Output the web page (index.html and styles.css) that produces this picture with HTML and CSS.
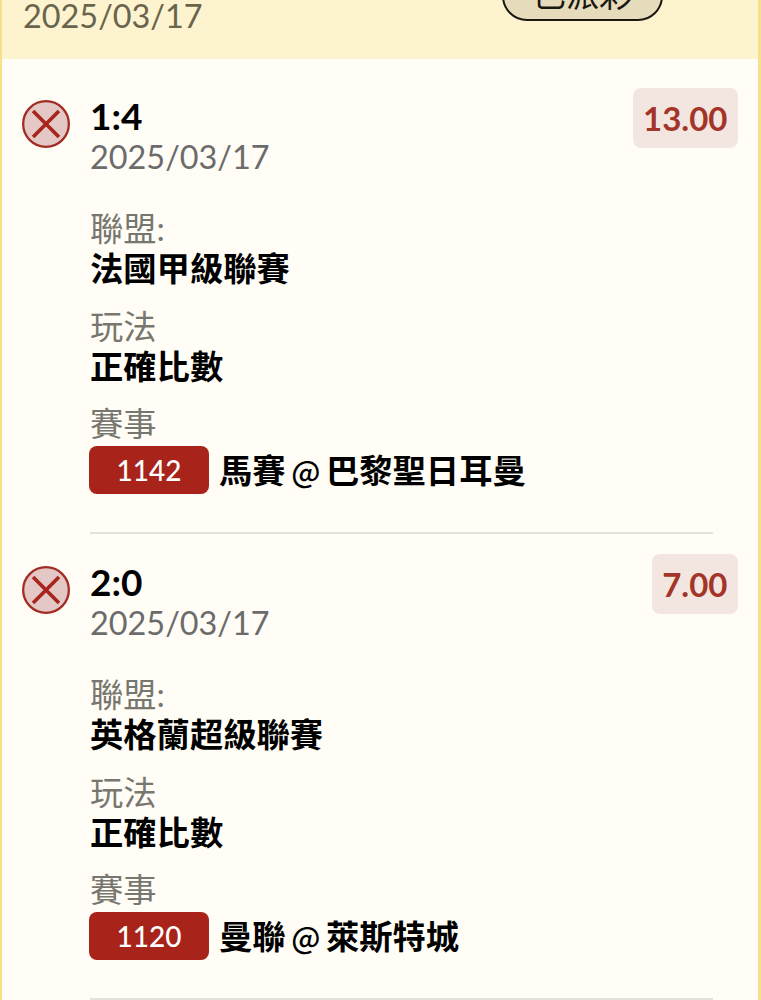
FILE: index.html
```html
<!DOCTYPE html>
<html lang="zh-Hant">
<head>
  <meta charset="UTF-8" />
  <meta name="viewport" content="width=device-width, initial-scale=1" />
  <title>已派彩</title>
  <link rel="stylesheet" href="styles.css">
</head>
<body>
  <div class="slip">
    <!-- Header -->
    <div class="slip-head">
      <div class="head-date">2025/03/17</div>
      <div class="paid-btn">已派彩</div>
    </div>

    <!-- Bet 1 -->
    <div class="bet">
      <svg class="lost-icon" viewBox="0 0 50 50">
        <circle cx="25" cy="25" r="23.8" fill="#e3c8c6" stroke="#a32c24" stroke-width="2.4"/>
        <path d="M11.5 11.5 L38.5 38.5 M38.5 11.5 L11.5 38.5" stroke="#a8241c" stroke-width="3.8"/>
      </svg>
      <div class="bet-body">
        <div class="bet-top">
          <div>
            <div class="score">1:4</div>
            <div class="bet-date">2025/03/17</div>
          </div>
          <div class="odds">13.00</div>
        </div>
        <div class="field first">
          <div class="field-label">聯盟:</div>
          <div class="field-value">法國甲級聯賽</div>
        </div>
        <div class="field">
          <div class="field-label">玩法</div>
          <div class="field-value">正確比數</div>
        </div>
        <div class="field">
          <div class="field-label">賽事</div>
          <div class="match">
            <span class="match-no">1142</span>
            <span class="field-value">馬賽 <span class="at">@</span> 巴黎聖日耳曼</span>
          </div>
        </div>
      </div>
    </div>
    <div class="divider"></div>

    <!-- Bet 2 -->
    <div class="bet">
      <svg class="lost-icon" viewBox="0 0 50 50">
        <circle cx="25" cy="25" r="23.8" fill="#e3c8c6" stroke="#a32c24" stroke-width="2.4"/>
        <path d="M11.5 11.5 L38.5 38.5 M38.5 11.5 L11.5 38.5" stroke="#a8241c" stroke-width="3.8"/>
      </svg>
      <div class="bet-body">
        <div class="bet-top">
          <div>
            <div class="score">2:0</div>
            <div class="bet-date">2025/03/17</div>
          </div>
          <div class="odds">7.00</div>
        </div>
        <div class="field first">
          <div class="field-label">聯盟:</div>
          <div class="field-value">英格蘭超級聯賽</div>
        </div>
        <div class="field">
          <div class="field-label">玩法</div>
          <div class="field-value">正確比數</div>
        </div>
        <div class="field">
          <div class="field-label">賽事</div>
          <div class="match">
            <span class="match-no">1120</span>
            <span class="field-value">曼聯 <span class="at">@</span> 萊斯特城</span>
          </div>
        </div>
      </div>
    </div>
    <div class="divider"></div>
  </div>
</body>
</html>
```

FILE: styles.css
```css
html, body {
  margin: 0;
  padding: 0;
  height: 1000px;
  overflow: hidden;
  background: #fffdf6;
}

body {
  font-family: Lato, "Noto Sans CJK TC", sans-serif;
}

.slip {
  height: 1000px;
  overflow: hidden;
  border-left: 2px solid #f6e08a;
  border-right: 3px solid #f6e08a;
  box-sizing: border-box;
  background: #fffdf6;
}

.slip-head {
  height: 59px;
  margin-bottom: 9px;
  background: #fdf3cf;
  display: flex;
  justify-content: space-between;
  padding: 0 95px 0 21px;
  overflow: hidden;
}

.head-date {
  font-size: 32.4px;
  line-height: 40px;
  color: #69644c;
  margin-top: -4px;
}

.paid-btn {
  width: 161px;
  height: 50px;
  margin-top: -29px;
  padding-bottom: 6px;
  box-sizing: border-box;
  border: 2.5px solid #1a1710;
  border-radius: 25px;
  background: #e6dcbc;
  display: flex;
  align-items: center;
  justify-content: center;
  font-size: 33px;
  color: #1a1710;
}

.bet {
  display: flex;
  padding: 20px 20px 0 20px;
}

.lost-icon {
  width: 48px;
  height: 48px;
  flex: none;
  margin-top: 12px;
  margin-right: 20px;
}

.bet-body {
  flex: 1;
}

.bet-top {
  display: flex;
  justify-content: space-between;
  align-items: flex-start;
}

.score {
  font-size: 37px;
  font-weight: 700;
  line-height: 42px;
  color: #000;
  margin-top: 7px;
}

.bet-date {
  font-size: 32.4px;
  line-height: 40px;
  color: #6b6b6b;
}

.odds {
  background: #f3e6e1;
  color: #a33428;
  font-size: 33px;
  font-weight: 700;
  line-height: 60px;
  padding: 0 10.5px;
  border-radius: 8px;
}

.field {
  margin-top: 17.5px;
}

.field.first {
  margin-top: 31px;
}

.field-label {
  font-size: 33.3px;
  line-height: 40px;
  color: #77776f;
}

.field-value {
  font-size: 33.3px;
  font-weight: 700;
  line-height: 40px;
  color: #000;
}

.match .field-value {
  word-spacing: -2.5px;
}

.at {
  font-family: "Noto Sans CJK TC", sans-serif;
  font-size: 30px;
  font-weight: 500;
}

.match {
  display: flex;
  align-items: center;
  gap: 10px;
  margin-top: 3px;
}

.match-no {
  width: 120px;
  height: 48px;
  margin-left: -1px;
  background: #a8231a;
  color: #fff;
  font-size: 28px;
  font-weight: 500;
  line-height: 48px;
  text-align: center;
  border-radius: 8px;
}

.divider {
  height: 2px;
  background: #e4e2dc;
  margin: 38px 45px 0 88px;
}
```
